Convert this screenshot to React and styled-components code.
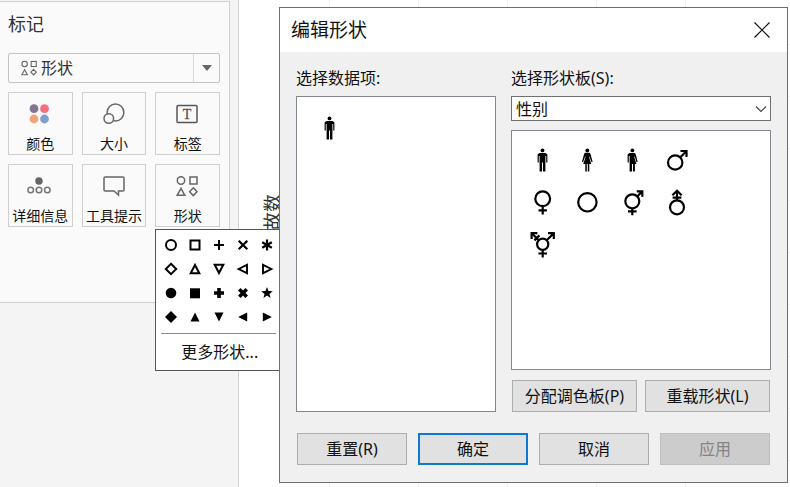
import React from "react";
import styled, { createGlobalStyle, css } from "styled-components";

const GlobalStyle = createGlobalStyle`
  * { box-sizing: border-box; }
  body {
    margin: 0;
    background: #fff;
    color: #111;
    overflow: hidden;
    font-family: "Noto Sans", "Noto Sans CJK SC", sans-serif;
    font-size: 16px;
    line-height: 24px;
  }
  button, select { font: inherit; color: inherit; margin: 0; }
`;

const Page = styled.div`
  position: relative;
  display: grid;
  grid-template-columns: 239px 1fr;
  min-height: 100vh;
`;

const Sidebar = styled.aside`
  background: #f4f4f4;
  border-right: 1px solid #d0d0d0;
  padding: 1px 8px 0 0;
`;

const MarksCard = styled.section`
  background: #fafafa;
  border: 1px solid #d0d0d0;
  border-left: 0;
  padding: 10px 9px 75px 8px;
`;

const CardTitle = styled.h2`
  margin: 0 0 17px;
  font-size: 18px;
  line-height: 24px;
  font-weight: 400;
  color: #333;
`;

const MarkTypeBox = styled.div`
  display: flex;
  align-items: center;
  height: 30px;
  padding-left: 12px;
  border: 1px solid #c4c4c4;
  border-radius: 2px;
  margin-bottom: 9px;
  color: #333;
`;

const PlainSelect = styled.select`
  appearance: none;
  flex: 1;
  min-width: 0;
  height: 100%;
  border: 0;
  background: transparent;
  padding: 0 4px;
  outline: none;
`;

const ArrowCell = styled.span`
  display: flex;
  align-items: center;
  justify-content: center;
  width: 26px;
  height: 100%;
  border-left: 1px solid #d8d8d8;
`;

const MarkGrid = styled.div`
  display: grid;
  grid-template-columns: repeat(3, 1fr);
  gap: 9px;
`;

const MarkSlot = styled.div`
  position: relative;
  display: grid;
`;

const MarkButton = styled.button`
  display: flex;
  flex-direction: column;
  align-items: center;
  justify-content: space-between;
  height: 63px;
  padding: 8px 0 0;
  border: 1px solid #cfcfcf;
  background: #fafafa;
  font-size: 14px;
  line-height: 20px;
  white-space: nowrap;
`;

const Popup = styled.div`
  position: absolute;
  z-index: 1;
  top: 65px;
  left: 0;
  width: 130px;
  padding: 3px 3px 6px;
  border: 1px solid #555;
  background: #fff;
`;

const ShapeGrid = styled.div`
  display: grid;
  grid-template-columns: repeat(5, 24px);
  grid-auto-rows: 24px;
`;

const ShapeButton = styled.button`
  display: grid;
  place-items: center;
  padding: 0;
  border: 0;
  background: transparent;
`;

const Divider = styled.hr`
  margin: 4px 5px 6px 2px;
  border: 0;
  border-top: 1px solid #8a8a8a;
`;

const MoreButton = styled.button`
  display: block;
  width: 100%;
  padding: 0 0 0 22px;
  border: 0;
  background: transparent;
  text-align: left;
  line-height: 24px;
`;

const Canvas = styled.main`
  display: flex;
`;

const Axis = styled.div`
  width: 50px;
  padding: 194px 0 0 21px;
`;

const Plot = styled.div`
  flex: 1;
  background-image:
    repeating-linear-gradient(to right, transparent 0 88px, #f0f0f0 88px 89px),
    repeating-linear-gradient(to bottom, transparent 0 51px, #f3f3f3 51px 52px);
  background-position: -48px 0, 0 -7px;
`;

const AxisTitle = styled.div`
  writing-mode: vertical-rl;
  text-orientation: sideways;
  transform: rotate(180deg);
  width: 24px;
  font-size: 18px;
  line-height: 24px;
  color: #333;
`;

const Dialog = styled.section`
  position: absolute;
  z-index: 2;
  top: 7px;
  left: 279px;
  right: 2px;
  border: 1px solid #6e6e6e;
  background: #f0f0f0;
`;

const TitleBar = styled.header`
  display: flex;
  align-items: center;
  justify-content: space-between;
  height: 44px;
  padding: 0 17px 0 11px;
  background: #fff;
`;

const DialogTitle = styled.h1`
  margin: 0;
  font-size: 19px;
  line-height: 28px;
  font-weight: 400;
`;

const CloseButton = styled.button`
  display: grid;
  padding: 0;
  border: 0;
  background: transparent;
`;

const DialogBody = styled.div`
  padding: 14px 16px 17px;
`;

const Columns = styled.div`
  display: grid;
  grid-template-columns: 10fr 13fr;
  gap: 15px;
`;

const Column = styled.div`
  display: flex;
  flex-direction: column;
`;

const FieldLabel = styled.label`
  line-height: 24px;
  margin-bottom: 6px;
`;

const boxed = css`
  border: 1px solid #828790;
  background: #fff;
`;

const ItemList = styled.div`
  ${boxed}
  flex: 1;
  padding: 10px 9px;
`;

const PaletteList = styled.div`
  ${boxed}
  display: grid;
  grid-template-columns: repeat(auto-fill, 45px);
  grid-auto-rows: 42px;
  height: 240px;
  padding: 8px 50px 8px 7px;
  margin: 9px 0 10px;
`;

const IconCell = styled.button`
  display: grid;
  place-items: center;
  width: 45px;
  height: 42px;
  padding: 0;
  border: 0;
  background: transparent;
`;

const ComboBox = styled.div`
  ${boxed}
  border-color: #707070;
  display: flex;
  align-items: center;
  height: 25px;
  padding-right: 3px;
`;

const ButtonRow = styled.div`
  display: grid;
  grid-auto-flow: column;
  grid-auto-columns: 1fr;
  gap: ${(p) => p.$gap}px;
  padding: 0 1px;
  margin-top: ${(p) => p.$top || 0}px;
`;

const DialogButton = styled.button`
  height: 32px;
  padding: 0;
  border: ${(p) => (p.$primary ? "2px solid #0f78d4" : "1px solid #adadad")};
  background: #e1e1e1;
  white-space: nowrap;
  &:disabled {
    background: #cccccc;
    border-color: #bfbfbf;
    color: #838383;
  }
`;

function Drawing({ size = 30, box = 15, children, ...rest }) {
  return (
    <svg
      width={size}
      height={size}
      viewBox={`${-box} ${-box} ${box * 2} ${box * 2}`}
      fill="none"
      aria-hidden="true"
      {...rest}
    >
      {children}
    </svg>
  );
}

const fourShapes = (
  <g stroke="#666" strokeWidth="1.5">
    <circle cx="-6" cy="-5.5" r="3.7" />
    <rect x="3" y="-9" width="7" height="7" />
    <path d="M-6 2.3 L-2.2 9.3 H-9.8 Z" />
    <path d="M6.3 1.8 L10 5.7 L6.3 9.6 L2.6 5.7 Z" />
  </g>
);

const markIcons = {
  color: (
    <>
      <circle cx="-6" cy="-5.3" r="4.4" fill="#857493" />
      <circle cx="4.5" cy="-5.3" r="4.4" fill="#f66f7f" />
      <circle cx="-6" cy="5" r="4.4" fill="#efa47a" />
      <circle cx="4.5" cy="5" r="4.4" fill="#7f9fc9" />
    </>
  ),
  size: (
    <g stroke="#666" strokeWidth="1.5" fill="#fafafa">
      <circle cx="1.5" cy="-1.5" r="8.4" />
      <circle cx="-5.2" cy="4.5" r="4.8" />
    </g>
  ),
  label: (
    <>
      <rect x="-11" y="-8.5" width="20" height="17" rx="1" stroke="#555" strokeWidth="1.5" />
      <text
        x="-1"
        y="5"
        textAnchor="middle"
        fontFamily="Liberation Serif, serif"
        fontSize="14"
        fill="#555"
        stroke="#555"
        strokeWidth="0.3"
      >
        T
      </text>
    </>
  ),
  detail: (
    <g stroke="#777" strokeWidth="1.5">
      <circle cx="-1" cy="-5" r="3" fill="#666" stroke="#666" />
      <circle cx="-9.3" cy="4" r="2.8" />
      <circle cx="-1" cy="4" r="2.8" />
      <circle cx="7.3" cy="4" r="2.8" />
    </g>
  ),
  tooltip: (
    <path
      d="M-9 -9 H9 Q10 -9 10 -8 V4 Q10 5 9 5 H4.5 V9 L0 5 H-9 Q-10 5 -10 4 V-8 Q-10 -9 -9 -9 Z"
      stroke="#666"
      strokeWidth="1.5"
    />
  ),
  shape: <g transform="translate(-1 0)">{fourShapes}</g>,
};

const star = "M0 -6 L1.5 -1.9 L5.8 -1.8 L2.4 0.9 L3.6 5.1 L0 2.6 L-3.6 5.1 L-2.4 0.9 L-5.8 -1.8 L-1.5 -1.9 Z";
const fatPlus = "M0 -5 V5 M-5 0 H5";

const shapeIcons = [
  ["圆", <circle r="5" strokeWidth="2" />],
  ["方形", <rect x="-4.5" y="-4.5" width="9" height="9" strokeWidth="2" />],
  ["加号", <path d={fatPlus} strokeWidth="2" />],
  ["叉号", <path d="M-4.3 -4.3 L4.3 4.3 M4.3 -4.3 L-4.3 4.3" strokeWidth="2.2" />],
  ["星号", <path d="M0 -5.5 V5.5 M-4.8 -2.8 L4.8 2.8 M4.8 -2.8 L-4.8 2.8" strokeWidth="2.2" />],
  ["菱形", <path d="M0 -5.2 L5.2 0 L0 5.2 L-5.2 0 Z" strokeWidth="2" />],
  ["上三角", <path d="M0 -4 L4.3 4.2 H-4.3 Z" strokeWidth="2" />],
  ["下三角", <path d="M0 4 L4.3 -4.2 H-4.3 Z" strokeWidth="2" />],
  ["左三角", <path d="M-4.4 0 L4 -4.2 V4.2 Z" strokeWidth="1.9" />],
  ["右三角", <path d="M4.4 0 L-4 -4.2 V4.2 Z" strokeWidth="1.9" />],
  ["实心圆", <circle r="5.3" fill="#000" stroke="none" />],
  ["实心方形", <rect x="-5" y="-4.7" width="10" height="10" fill="#000" stroke="none" />],
  ["实心加号", <path d={fatPlus} strokeWidth="3.6" />],
  ["实心叉号", <path d="M-3.7 -3.7 L3.7 3.7 M3.7 -3.7 L-3.7 3.7" strokeWidth="3.6" />],
  ["实心星", <path d={star} fill="#000" stroke="none" />],
  ["实心菱形", <path d="M0 -6 L6 0 L0 6 L-6 0 Z" fill="#000" stroke="none" />],
  ["实心上三角", <path d="M0 -4.5 L4.5 4.5 H-4.5 Z" fill="#000" stroke="none" />],
  ["实心下三角", <path d="M0 4.5 L4.5 -4.5 H-4.5 Z" fill="#000" stroke="none" />],
  ["实心左三角", <path d="M-4.8 0 L4.2 -4.5 V4.5 Z" fill="#000" stroke="none" />],
  ["实心右三角", <path d="M4.8 0 L-4.2 -4.5 V4.5 Z" fill="#000" stroke="none" />],
];

const man = (
  <g fill="#000">
    <circle cx="0.5" cy="-9.6" r="1.9" />
    <path d="M-2.6 -7 H3.6 L5.4 -5.6 V2.4 H4.2 V-4 H3.4 V11.6 H1 V2.4 H0 V11.6 H-2.4 V-4 H-3.2 V2.4 H-4.4 V-5.6 Z" />
  </g>
);

const genderIcons = [
  ["男", man],
  [
    "女",
    <g fill="#000">
      <circle cx="0.3" cy="-9.6" r="1.9" />
      <path d="M-1.5 -7.2 H2.1 Q3.1 -7.2 3.5 -6 L5.6 1.8 L4.5 2.2 L2.3 -4 L2.2 -2.4 L4.3 4 H2.3 V11.6 H0.8 V4 H-0.2 V11.6 H-1.7 V4 H-3.7 L-1.6 -2.4 L-1.7 -4 L-3.9 2.2 L-5 1.8 L-2.9 -6 Q-2.5 -7.2 -1.5 -7.2 Z" />
    </g>,
  ],
  [
    "男女",
    <g fill="#000">
      <circle cx="0.4" cy="-9.6" r="1.9" />
      <path d="M-2.6 -7 H2.2 Q3.2 -7 3.6 -6 L5.7 1.8 L4.6 2.2 L2.5 -4 L2.4 -2.4 L4.4 4 H2.9 V11.6 H1 V4 H0 V11.6 H-2.4 V-4 H-3.2 V2.4 H-4.4 V-5.6 Z" />
    </g>,
  ],
  [
    "雄性",
    <>
      <circle cx="-1.8" cy="2.5" r="7.2" />
      <path d="M3.6 -3 L9 -8.5 M3.5 -9 H9.5 V-3" />
    </>,
  ],
  [
    "雌性",
    <>
      <circle cx="0.7" cy="-3.2" r="7.4" />
      <path d="M0.7 4.2 V12.5 M-3.5 8.3 H4.9" />
    </>,
  ],
  ["无性别", <circle cx="0.4" cy="0.3" r="9.2" />],
  [
    "双性",
    <>
      <circle cx="0.3" cy="-0.7" r="7" />
      <path d="M5.3 -5.7 L10 -10.3 M4.8 -10.7 H10.3 V-5.2 M0.3 6.3 V13.3 M-4 9.3 H4.6" />
    </>,
  ],
  [
    "中性",
    <>
      <circle cx="0" cy="5.3" r="7" />
      <path d="M0 -1.5 V-11.5 M-4.6 -6.8 L0 -11.3 L4.6 -6.8 M-4.4 -4.3 H4.4" />
    </>,
  ],
  [
    "跨性别",
    <>
      <circle cx="0.7" cy="0.3" r="5.6" />
      <path d="M4.7 -3.7 L11.5 -10.5 M6 -10.8 H11.8 V-5 M-3.3 -3.7 L-10 -10.5 M-4.6 -10.8 H-10.4 V-5 M-7.6 -3.6 L-2.6 -8.6 M0.7 6 V13.4 M-3.6 9.5 H5" />
    </>,
  ],
];

const marks = [
  ["颜色", "color"],
  ["大小", "size"],
  ["标签", "label"],
  ["详细信息", "detail"],
  ["工具提示", "tooltip"],
  ["形状", "shape"],
];

function ShapePopup() {
  return (
    <Popup>
      <ShapeGrid>
        {shapeIcons.map(([name, icon]) => (
          <ShapeButton key={name} aria-label={name}>
            <Drawing size={18} box={9} stroke="#000">
              {icon}
            </Drawing>
          </ShapeButton>
        ))}
      </ShapeGrid>
      <Divider />
      <MoreButton>更多形状...</MoreButton>
    </Popup>
  );
}

function MarksPanel() {
  return (
    <Sidebar>
      <MarksCard>
        <CardTitle>标记</CardTitle>
        <MarkTypeBox>
          <Drawing size={16} box={11}>
            {fourShapes}
          </Drawing>
          <PlainSelect aria-label="标记类型" defaultValue="形状">
            <option>形状</option>
          </PlainSelect>
          <ArrowCell>
            <Drawing size={12} box={6}>
              <path d="M-5 -3 H5 L0 3 Z" fill="#666" />
            </Drawing>
          </ArrowCell>
        </MarkTypeBox>
        <MarkGrid>
          {marks.map(([text, icon]) => (
            <MarkSlot key={icon}>
              <MarkButton>
                <Drawing size={26} box={13}>
                  {markIcons[icon]}
                </Drawing>
                {text}
              </MarkButton>
              {icon === "shape" && <ShapePopup />}
            </MarkSlot>
          ))}
        </MarkGrid>
      </MarksCard>
    </Sidebar>
  );
}

function EditShapeDialog() {
  return (
    <Dialog role="dialog" aria-labelledby="dialog-title">
      <TitleBar>
        <DialogTitle id="dialog-title">编辑形状</DialogTitle>
        <CloseButton aria-label="关闭">
          <Drawing size={16} box={8} stroke="#111" strokeWidth="1.2">
            <path d="M-7.5 -7.5 L7.5 7.5 M7.5 -7.5 L-7.5 7.5" />
          </Drawing>
        </CloseButton>
      </TitleBar>
      <DialogBody>
        <Columns>
          <Column>
            <FieldLabel as="span" id="items-label">选择数据项:</FieldLabel>
            <ItemList role="group" aria-labelledby="items-label">
              <IconCell aria-label="数据项">
                <Drawing>{man}</Drawing>
              </IconCell>
            </ItemList>
          </Column>
          <Column>
            <FieldLabel htmlFor="palette">选择形状板(S):</FieldLabel>
            <ComboBox>
              <PlainSelect id="palette" defaultValue="性别">
                <option>性别</option>
              </PlainSelect>
              <Drawing size={12} box={6} stroke="#444" strokeWidth="1.2">
                <path d="M-5 -2.5 L0 2.5 L5 -2.5" />
              </Drawing>
            </ComboBox>
            <PaletteList>
              {genderIcons.map(([name, icon]) => (
                <IconCell key={name} aria-label={name}>
                  <Drawing>
                    {["男", "女", "男女"].includes(name) ? (
                      icon
                    ) : (
                      <g stroke="#000" strokeWidth="2.2">{icon}</g>
                    )}
                  </Drawing>
                </IconCell>
              ))}
            </PaletteList>
            <ButtonRow $gap={8}>
              <DialogButton>分配调色板(P)</DialogButton>
              <DialogButton>重载形状(L)</DialogButton>
            </ButtonRow>
          </Column>
        </Columns>
        <ButtonRow $gap={11} $top={21}>
          <DialogButton>重置(R)</DialogButton>
          <DialogButton $primary>确定</DialogButton>
          <DialogButton>取消</DialogButton>
          <DialogButton disabled>应用</DialogButton>
        </ButtonRow>
      </DialogBody>
    </Dialog>
  );
}

export default function App() {
  return (
    <>
      <GlobalStyle />
      <Page>
        <MarksPanel />
        <Canvas>
          <Axis>
            <AxisTitle>故数</AxisTitle>
          </Axis>
          <Plot />
        </Canvas>
        <EditShapeDialog />
      </Page>
    </>
  );
}
